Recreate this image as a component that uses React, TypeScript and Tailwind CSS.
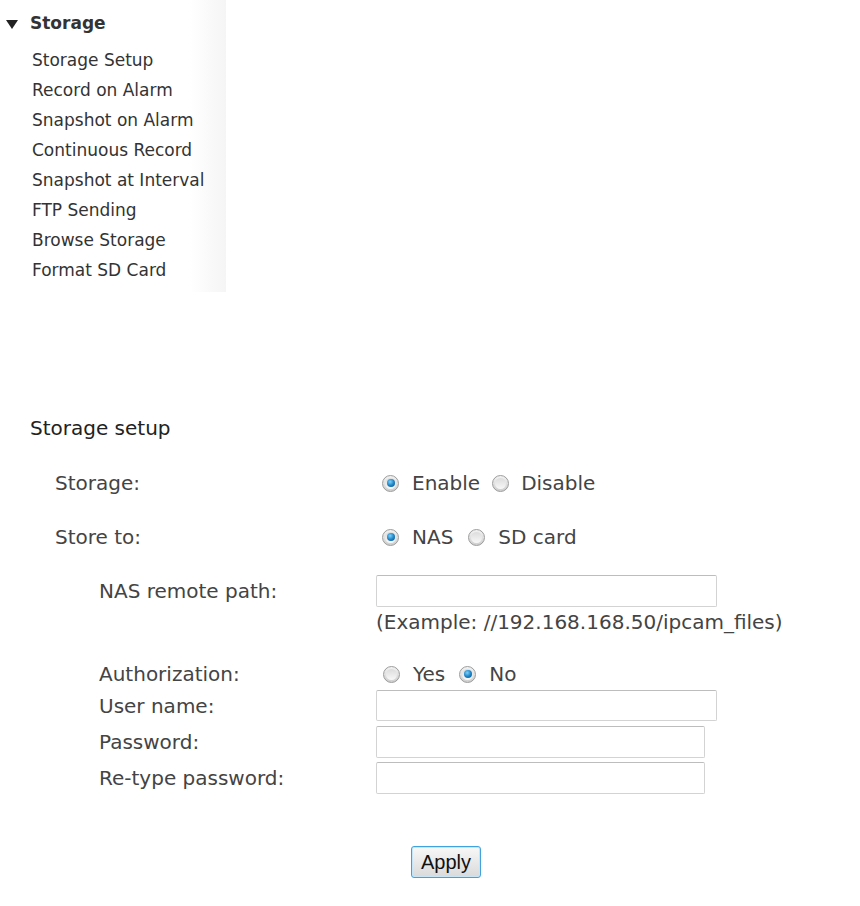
import React, { useState } from "react"

const menu = [
  "Storage Setup",
  "Record on Alarm",
  "Snapshot on Alarm",
  "Continuous Record",
  "Snapshot at Interval",
  "FTP Sending",
  "Browse Storage",
  "Format SD Card",
]

const Radio = ({ checked, onClick }: { checked: boolean; onClick: () => void }) => (
  <span
    onClick={onClick}
    className="flex items-center justify-center w-[17px] h-[17px] rounded-full border border-[#9c9c9c] bg-gradient-to-b from-[#f2f2f2] to-[#cfcfcf] cursor-pointer shrink-0"
  >
    <span className="flex items-center justify-center w-[11px] h-[11px] rounded-full bg-gradient-to-b from-[#dcdcdc] to-[#f8f8f8]">
      {checked && (
        <span className="w-[8px] h-[8px] rounded-full bg-[radial-gradient(circle_at_40%_35%,#7fd0f8_0%,#1e86c8_50%,#0b4a80_100%)]" />
      )}
    </span>
  </span>
)

const Field = ({ w }: { w: string }) => (
  <input
    className={`${w} h-full border border-[#d3d3d3] border-t-[#bdbdbd] rounded-[2px] bg-white outline-none px-1 text-[16px]`}
  />
)

export default function App() {
  const [storage, setStorage] = useState("enable")
  const [target, setTarget] = useState("nas")
  const [auth, setAuth] = useState("no")

  return (
    <div className="w-[860px] min-h-[906px] bg-white text-[#444]" style={{ fontFamily: "'DejaVu Sans', Verdana, sans-serif" }}>
      {/* side menu */}
      <div className="w-[226px] h-[292px] pt-[9px] bg-[linear-gradient(to_right,#ffffff_0%,#ffffff_84%,#f5f5f5_100%)] text-[#333] text-[17px]">
        <div className="flex items-center h-[30px]">
          <svg width="12" height="9" viewBox="0 0 12 9" className="ml-[6px] mr-[12px]">
            <polygon points="0,0 12,0 6,9" fill="#222" />
          </svg>
          <span className="font-bold">Storage</span>
        </div>
        <div className="mt-[7px]">
          {menu.map((m) => (
            <div key={m} className="h-[30px] flex items-center pl-[32px]">{m}</div>
          ))}
        </div>
      </div>

      {/* form */}
      <div className="mt-[124px] text-[20px]">
        <div className="h-[24px] leading-[24px] pl-[30px] text-[#222]">Storage setup</div>

        <div className="mt-[26px] h-[34px] flex items-center">
          <div className="w-[376px] pl-[55px]">Storage:</div>
          <div className="flex items-center">
            <span className="ml-[6px] flex"><Radio checked={storage === "enable"} onClick={() => setStorage("enable")} /></span>
            <span className="ml-[13px]">Enable</span>
            <span className="ml-[12px] flex"><Radio checked={storage === "disable"} onClick={() => setStorage("disable")} /></span>
            <span className="ml-[12px]">Disable</span>
          </div>
        </div>

        <div className="mt-[20px] h-[34px] flex items-center">
          <div className="w-[376px] pl-[55px]">Store to:</div>
          <div className="flex items-center">
            <span className="ml-[6px] flex"><Radio checked={target === "nas"} onClick={() => setTarget("nas")} /></span>
            <span className="ml-[13px]">NAS</span>
            <span className="ml-[15px] flex"><Radio checked={target === "sd"} onClick={() => setTarget("sd")} /></span>
            <span className="ml-[13px]">SD card</span>
          </div>
        </div>

        <div className="mt-[21px] h-[32px] flex items-center">
          <div className="w-[376px] pl-[99px]">NAS remote path:</div>
          <Field w="w-[341px]" />
        </div>
        <div className="mt-[5px] h-[20px] leading-[20px] pl-[376px]">(Example: //192.168.168.50/ipcam_files)</div>

        <div className="mt-[32px] h-[20px] flex items-center">
          <div className="w-[376px] pl-[99px]">Authorization:</div>
          <div className="flex items-center">
            <span className="ml-[7px] flex"><Radio checked={auth === "yes"} onClick={() => setAuth("yes")} /></span>
            <span className="ml-[13px]">Yes</span>
            <span className="ml-[14px] flex"><Radio checked={auth === "no"} onClick={() => setAuth("no")} /></span>
            <span className="ml-[13px]">No</span>
          </div>
        </div>

        <div className="mt-[6px] h-[31px] flex items-center">
          <div className="w-[376px] pl-[99px]">User name:</div>
          <Field w="w-[341px]" />
        </div>
        <div className="mt-[5px] h-[32px] flex items-center">
          <div className="w-[376px] pl-[99px]">Password:</div>
          <Field w="w-[329px]" />
        </div>
        <div className="mt-[4px] h-[32px] flex items-center">
          <div className="w-[376px] pl-[99px]">Re-type password:</div>
          <Field w="w-[329px]" />
        </div>

        <div className="mt-[52px] flex">
          <button
            className="ml-[411px] w-[70px] h-[32px] rounded-[3px] border border-[#3fa3df] bg-gradient-to-b from-[#f8f8f8] to-[#dadada] text-[#111] text-[20px] shadow-[inset_0_0_0_1px_#c4e6f8]"
            style={{ fontFamily: "'Liberation Sans', Arial, sans-serif" }}
          >
            Apply
          </button>
        </div>
      </div>
    </div>
  )
}
